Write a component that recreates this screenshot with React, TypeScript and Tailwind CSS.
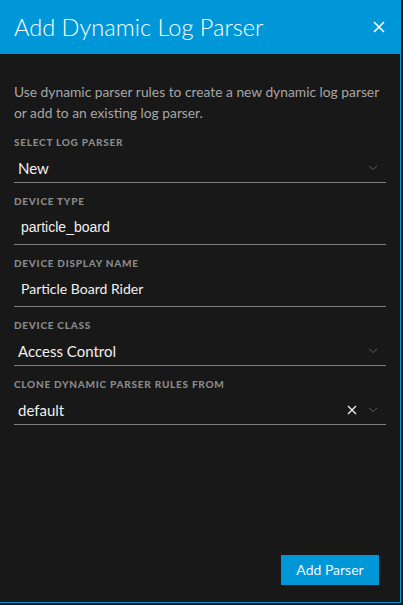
import type { ReactNode } from "react";

const lato = "font-['Lato',sans-serif]";
const arial = "font-['Liberation_Sans',Arial,sans-serif]";

function Chevron() {
  return (
    <svg width="10" height="6" viewBox="0 0 10 6" className="shrink-0">
      <path d="M1 1 L5 4.5 L9 1" fill="none" stroke="#5a5a5a" strokeWidth="1" />
    </svg>
  );
}

function ClearX() {
  return (
    <svg width="10" height="10" viewBox="0 0 10 10" className="shrink-0">
      <path d="M1 1 L9 9 M9 1 L1 9" stroke="#f2f2f2" strokeWidth="1.3" />
    </svg>
  );
}

function Field({ label, children, input }: { label: string; children: ReactNode; input?: boolean }) {
  return (
    <div>
      <div className={`${lato} h-[12px] text-[10px] font-black uppercase leading-[12px] tracking-[0.075em] text-[#8a8a8a]`}>
        {label}
      </div>
      <div
        className={`flex items-center border-b border-[#7d7d7d] pt-[10px] ${input ? "pb-[7px] pl-[7px]" : "pb-[4px] pl-[4px] pr-[8px]"}`}
      >
        {children}
      </div>
    </div>
  );
}

export default function App() {
  return (
    <div className="h-[605px] w-[403px] bg-[#151515]">
      <div className="flex h-[603px] w-[401px] flex-col border-b border-r border-[#0097d8] bg-[#181818]">
        <div className="flex h-[54px] shrink-0 items-center justify-between bg-[#0097d8] pl-[14px] pr-[15px]">
          <h1 className={`${lato} text-[23.6px] font-light leading-[30px] text-white`}>Add Dynamic Log Parser</h1>
          <svg width="12" height="12" viewBox="0 0 12 12">
            <path d="M1 1 L11 11 M11 1 L1 11" stroke="#ffffff" strokeWidth="1.6" />
          </svg>
        </div>

        <div className="flex flex-1 flex-col px-[14px] pt-[27px]">
          <p className={`${lato} text-[13.8px] leading-[21px] text-[#a6a6a6]`}>
            Use dynamic parser rules to create a new dynamic log parser or add to an existing log parser.
          </p>

          <div className="mt-[13px] flex flex-col gap-[12px]">
            <Field label="Select Log Parser">
              <span className={`${lato} flex-1 text-[15px] leading-[20px] text-[#f0f0f0]`}>New</span>
              <Chevron />
            </Field>
            <Field label="Device Type" input>
              <span className={`${arial} flex-1 text-[14px] leading-[20px] text-[#f0f0f0]`}>particle_board</span>
            </Field>
            <Field label="Device Display Name" input>
              <span className={`${lato} flex-1 text-[14px] leading-[20px] text-[#f0f0f0]`}>Particle Board Rider</span>
            </Field>
            <Field label="Device Class">
              <span className={`${lato} flex-1 text-[15px] leading-[20px] text-[#f0f0f0]`}>Access Control</span>
              <Chevron />
            </Field>
            <Field label="Clone Dynamic Parser Rules From">
              <span className={`${lato} flex-1 text-[15px] leading-[20px] text-[#f0f0f0]`}>default</span>
              <span className="mr-[11px] flex">
                <ClearX />
              </span>
              <Chevron />
            </Field>
          </div>

          <div className="mt-auto flex justify-end pb-[17px] pr-[7px]">
            <button
              className={`${lato} h-[30px] w-[98px] bg-[#0097d8] text-[14px] leading-[30px] text-[#eef6fb]`}
            >
              Add Parser
            </button>
          </div>
        </div>
      </div>
    </div>
  );
}
